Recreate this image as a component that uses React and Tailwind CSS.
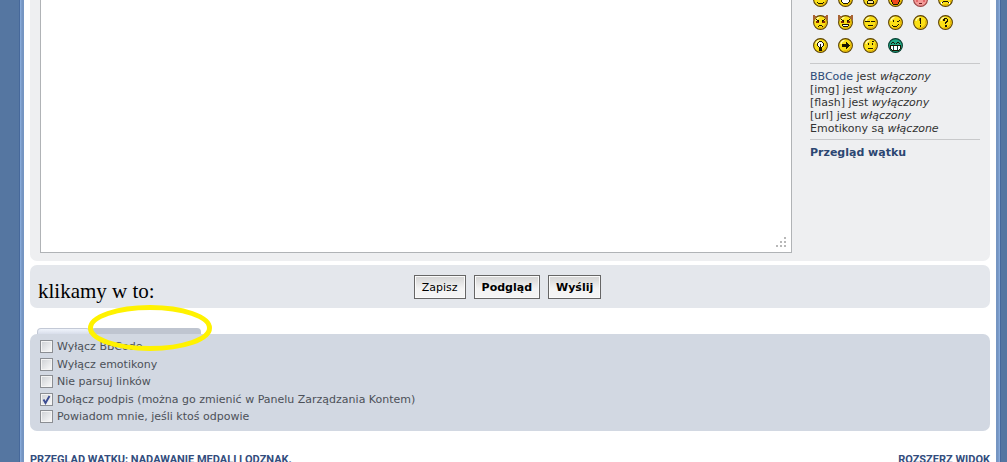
import React from "react";

const BROWN = "#5c4208";
const INK = "#1c1600";

const FACES = {
  smile: { d: "M4 10h1v1h-1zM5 11h5v1h-5zM10 10h1v1h-1zM5 5h1v2h-1zM9 5h1v2h-1z" },
  grin: { d: "M3 8h9v2h-1v1h-1v1h-5v-1h-1v-1h-1zM5 4h1v2h-1zM9 4h1v2h-1z", extra: "M4 8h7v2h-1v1h-5v-1h-1z", extraColor: "#fff" },
  frown: { d: "M5 8h5v1h1v3h-7v-3h1zM5 5h1v2h-1zM9 5h1v2h-1z", extra: "M5 9h5v2h-5z", extraColor: "#fbe89a" },
  laugh: { d: "M3 8h9v2h-1v2h-1v1h-5v-1h-1v-2h-1z", extra: "M4 8h7v2h-1v2h-5v-2h-1z", extraColor: "#f04820" },
  blush: { face: "#f39a98", edge: "#9a4444", d: "M6 11h3v1h-3zM5 5h1v2h-1zM9 5h1v2h-1z", extra: "M3 8h2v2h-2zM10 8h2v2h-2z", extraColor: "#e4686c" },
  sad: { d: "M5 9h5v1h-5zM4 10h1v1h-1zM10 10h1v1h-1zM5 5h1v2h-1zM9 5h1v2h-1z", extra: "M3 10h1v2h-1zM11 10h1v2h-1z", extraColor: "#fff" },
  evil: { horns: true, d: "M3 4h1v1h-1zM4 5h2v1h-2zM11 4h1v1h-1zM9 5h2v1h-2zM5 6h1v1h-1zM9 6h1v1h-1zM6 10h3v1h-3zM5 11h1v1h-1zM9 11h1v1h-1z", extra: "M3 6h2v2h-2zM5 7h1v1h-1zM10 6h2v2h-2zM9 7h1v1h-1z", extraColor: "#8c2800" },
  twisted: { horns: true, d: "M3 4h1v1h-1zM4 5h2v1h-2zM11 4h1v1h-1zM9 5h2v1h-2zM5 6h1v1h-1zM9 6h1v1h-1zM4 9h7v2h-1v1h-5v-1h-1z", extra: "M3 6h2v2h-2zM5 7h1v1h-1zM10 6h2v2h-2zM9 7h1v1h-1z", extraColor: "#8c2800", teeth: "M5 10h5v1h-5z" },
  roll: { d: "M2 6h5v1h-5zM8 6h4v1h-4zM5 10h5v1h-5z" },
  wink: { d: "M5 5h1v2h-1zM9 6h2v1h-2zM11 5h1v1h-1zM5 11h4v1h-4zM4 10h1v1h-1zM9 10h1v1h-1zM10 9h1v1h-1z" },
  exclaim: { d: "M7 3h1v6h-1zM7 10h1v2h-1z", extra: "M6 3h1v3h-1z", extraColor: "#8a7400" },
  question: { d: "M6 3h3v1h-3zM5 4h2v2h-2zM9 4h1v3h-1zM8 6h1v2h-1zM7 7h1v2h-1zM7 10h2v2h-2z" },
  idea: { d: "M6 3h3v1h-3zM5 4h1v1h-1zM9 4h1v1h-1zM4 5h1v3h-1zM10 5h1v3h-1zM5 8h1v1h-1zM9 8h1v1h-1zM6 9h3v4h-3zM7 6h1v3h-1z", extra: "M6 4h3v1h1v3h-1v1h-1v-3h-1v3h-1v-1h-1v-3h1z", extraColor: "#fff" },
  arrow: { d: "M4 6h4v-2h1v1h1v1h1v1h1v1h-1v1h-1v1h-1v1h-1v-2h-4z" },
  neutral: { d: "M5 5h1v2h-1zM9 5h1v2h-1zM5 10h5v1h-5zM9 3h2v1h-2z" },
  green: { face: "#22a884", edge: "#063d30", d: "M4 4h2v1h-2zM3 5h1v1h-1zM6 5h1v1h-1zM9 4h2v1h-2zM8 5h1v1h-1zM11 5h1v1h-1zM2 7h11v4h-1v1h-1v1h-7v-1h-1v-1h-1z", extra: "M3 8h9v3h-1v1h-7v-1h-1z", extraColor: "#fff", gaps: "M5 8h1v4h-1zM9 8h1v4h-1z" },
};

function Smiley({ name }) {
  const f = FACES[name];
  const face = f.face || "#fbe016";
  return (
    <svg width="15" height="15" viewBox="0 0 15 15" className="block shrink-0" aria-hidden="true">
      <circle cx="7.5" cy="7.5" r="6.9" fill={face} stroke={f.edge || BROWN} strokeWidth="1.1" />
      {!f.face && <path d="M12.7 5.5A5.8 5.8 0 0 1 5.5 12.9" fill="none" stroke="#e0a800" strokeWidth="1" />}
      {!f.face && <path d="M3 6Q3.5 3 6.5 2.4" fill="none" stroke="#fff9a8" strokeWidth="1.2" />}
      {f.horns && <path d="M0 0h2v1h2v1h-1v1h-1v2h-2zM15 0h-2v1h-2v1h1v1h1v2h2z" fill="#a86434" shapeRendering="crispEdges" />}
      <path d={f.d} fill={f.face === "#f39a98" ? "#6c2020" : INK} shapeRendering="crispEdges" />
      {f.extra && <path d={f.extra} fill={f.extraColor} shapeRendering="crispEdges" />}
      {f.teeth && <path d={f.teeth} fill="#fff" shapeRendering="crispEdges" />}
      {f.gaps && <path d={f.gaps} fill="#0b4a3a" shapeRendering="crispEdges" />}
    </svg>
  );
}

const TOP_ROW = ["smile", "grin", "frown", "laugh", "blush", "sad"];
const ROWS = [
  ["evil", "twisted", "roll", "wink", "exclaim", "question"],
  ["idea", "arrow", "neutral", "green"],
];

function SmileyButton({ name }) {
  return (
    <button type="button" aria-label={name} className="block">
      <Smiley name={name} />
    </button>
  );
}

const STATUS = [
  ["[img] jest", "włączony"],
  ["[flash] jest", "wyłączony"],
  ["[url] jest", "włączony"],
  ["Emotikony są", "włączone"],
];

const OPTIONS = [
  { id: "bbcode", label: "Wyłącz BBCode" },
  { id: "smilies", label: "Wyłącz emotikony" },
  { id: "links", label: "Nie parsuj linków" },
  { id: "signature", label: "Dołącz podpis (można go zmienić w Panelu Zarządzania Kontem)", checked: true },
  { id: "notify", label: "Powiadom mnie, jeśli ktoś odpowie" },
];

function Option({ id, label, checked }) {
  return (
    <div className="flex h-[13px] items-center gap-1">
      <span className="relative block size-[13px]">
        <input
          id={id}
          type="checkbox"
          defaultChecked={checked}
          className="peer block size-[13px] appearance-none border border-[#8b8e93] bg-linear-to-br from-[#cdd0d4] to-[#fbfbfb] shadow-[inset_0_0_0_1px_#f4f4f4]"
        />
        <svg viewBox="0 0 13 13" className="pointer-events-none absolute inset-0 hidden peer-checked:block" aria-hidden="true">
          <path d="M3.5 6.5L5.5 10L9.5 3" fill="none" stroke="#3c4c92" strokeWidth="1.9" />
        </svg>
      </span>
      <label htmlFor={id} className="whitespace-nowrap">{label}</label>
    </div>
  );
}

const BUTTON =
  "h-6 border border-[#666] bg-linear-to-b from-[#d4d4d4] to-[#f4f4f4] to-60% px-[7px] text-black shadow-[inset_0_0_0_1px_#fafafa]";

export default function App() {
  return (
    <div className="flex h-screen overflow-hidden bg-[#5576a1] pl-[19px] pr-[6px] font-['DejaVu_Sans','Liberation_Sans',sans-serif] text-[11px] leading-[13px] text-[#333]">
      <div className="w-[5px] shrink-0 border-l border-[#46689a] bg-linear-to-r from-[#8fb2e2] to-[#7595c2] to-50%" />
      <main className="relative min-w-0 flex-1 bg-white px-1.5">
        <section className="flex gap-[18px] rounded-b-[7px] bg-[#eeeff1] px-2.5 pb-2">
          <div className="relative min-w-0 flex-1">
            <textarea
              aria-label="Treść wiadomości"
              className="block h-[253px] w-full resize-none border border-t-0 border-[#b0b3b6] bg-white p-1 outline-none"
            />
            <svg width="10" height="10" viewBox="0 0 10 10" className="pointer-events-none absolute right-1.5 bottom-1.5" aria-hidden="true">
              <path d="M8 0h2v2h-2zM4 4h2v2h-2zM8 4h2v2h-2zM0 8h2v2h-2zM4 8h2v2h-2zM8 8h2v2h-2z" fill="#b8b8b8" />
            </svg>
          </div>
          <aside className="w-[170px] shrink-0">
            <div className="flex flex-col gap-2 px-[3px]">
              <div className="flex h-[7px] items-end gap-2.5 overflow-hidden">
                {TOP_ROW.map((n) => <SmileyButton key={n} name={n} />)}
              </div>
              {ROWS.map((row) => (
                <div key={row[0]} className="flex gap-2.5">
                  {row.map((n) => <SmileyButton key={n} name={n} />)}
                </div>
              ))}
            </div>
            <hr className="mt-2.5 mb-1.5 border-[#c8c9cb]" />
            <p><a href="#bbcode" className="text-[#2c4a78]">BBCode</a> jest <em>włączony</em></p>
            {STATUS.map(([a, b]) => <p key={a}>{a} <em>{b}</em></p>)}
            <hr className="mt-1 mb-1.5 border-[#c8c9cb]" />
            <a href="#review" className="block font-bold text-[#2b4672]">Przegląd wątku</a>
          </aside>
        </section>

        <section className="mt-1 flex justify-center gap-2 rounded-[7px] bg-[#e4e7ec] pt-2.5 pb-[9px] pr-[5px]">
          <button type="button" className={BUTTON}>Zapisz</button>
          <button type="button" className={BUTTON + " font-bold"}>Podgląd</button>
          <button type="button" className={BUTTON + " font-bold"}>Wyślij</button>
        </section>

        <div className="mt-5 flex gap-px px-[7px]">
          <button type="button" aria-label="Opcje" className="h-1.5 w-[53px] rounded-t-[4px] border border-b-0 border-[#c3c9d6] bg-linear-to-b from-[#f0f4fc] to-[#d8deea]" />
          <button type="button" aria-label="Załączniki" className="h-1.5 w-[110px] rounded-t-[4px] bg-[#bfc5d0]" />
        </div>
        <section className="rounded-[7px] bg-[#d2d8e2] px-2.5 pt-1.5 pb-2 text-[#4c5058]">
          <div className="flex h-[83px] flex-col justify-between">
            {OPTIONS.map((o) => <Option key={o.id} {...o} />)}
          </div>
        </section>

        <div className="mt-[21px] flex justify-between font-[Roboto,'Liberation_Sans',sans-serif] leading-4 font-bold text-[#334d7d]">
          <h3>PRZEGLĄD WĄTKU: NADAWANIE MEDALI I ODZNAK.</h3>
          <a href="#expand">ROZSZERZ WIDOK</a>
        </div>

        <span className="absolute top-[279px] left-3.5 font-['Liberation_Serif',serif] text-[21px] leading-6 text-black">klikamy w to:</span>
        <svg width="126" height="48" viewBox="0 0 126 48" className="pointer-events-none absolute top-[304px] left-[63px]" aria-hidden="true">
          <ellipse cx="63" cy="24" rx="59.5" ry="20.5" fill="none" stroke="#fff200" strokeWidth="5" />
        </svg>
      </main>
      <div className="w-[5px] shrink-0 border-r border-[#46689a] bg-linear-to-l from-[#8fb2e2] to-[#7595c2] to-50%" />
    </div>
  );
}
